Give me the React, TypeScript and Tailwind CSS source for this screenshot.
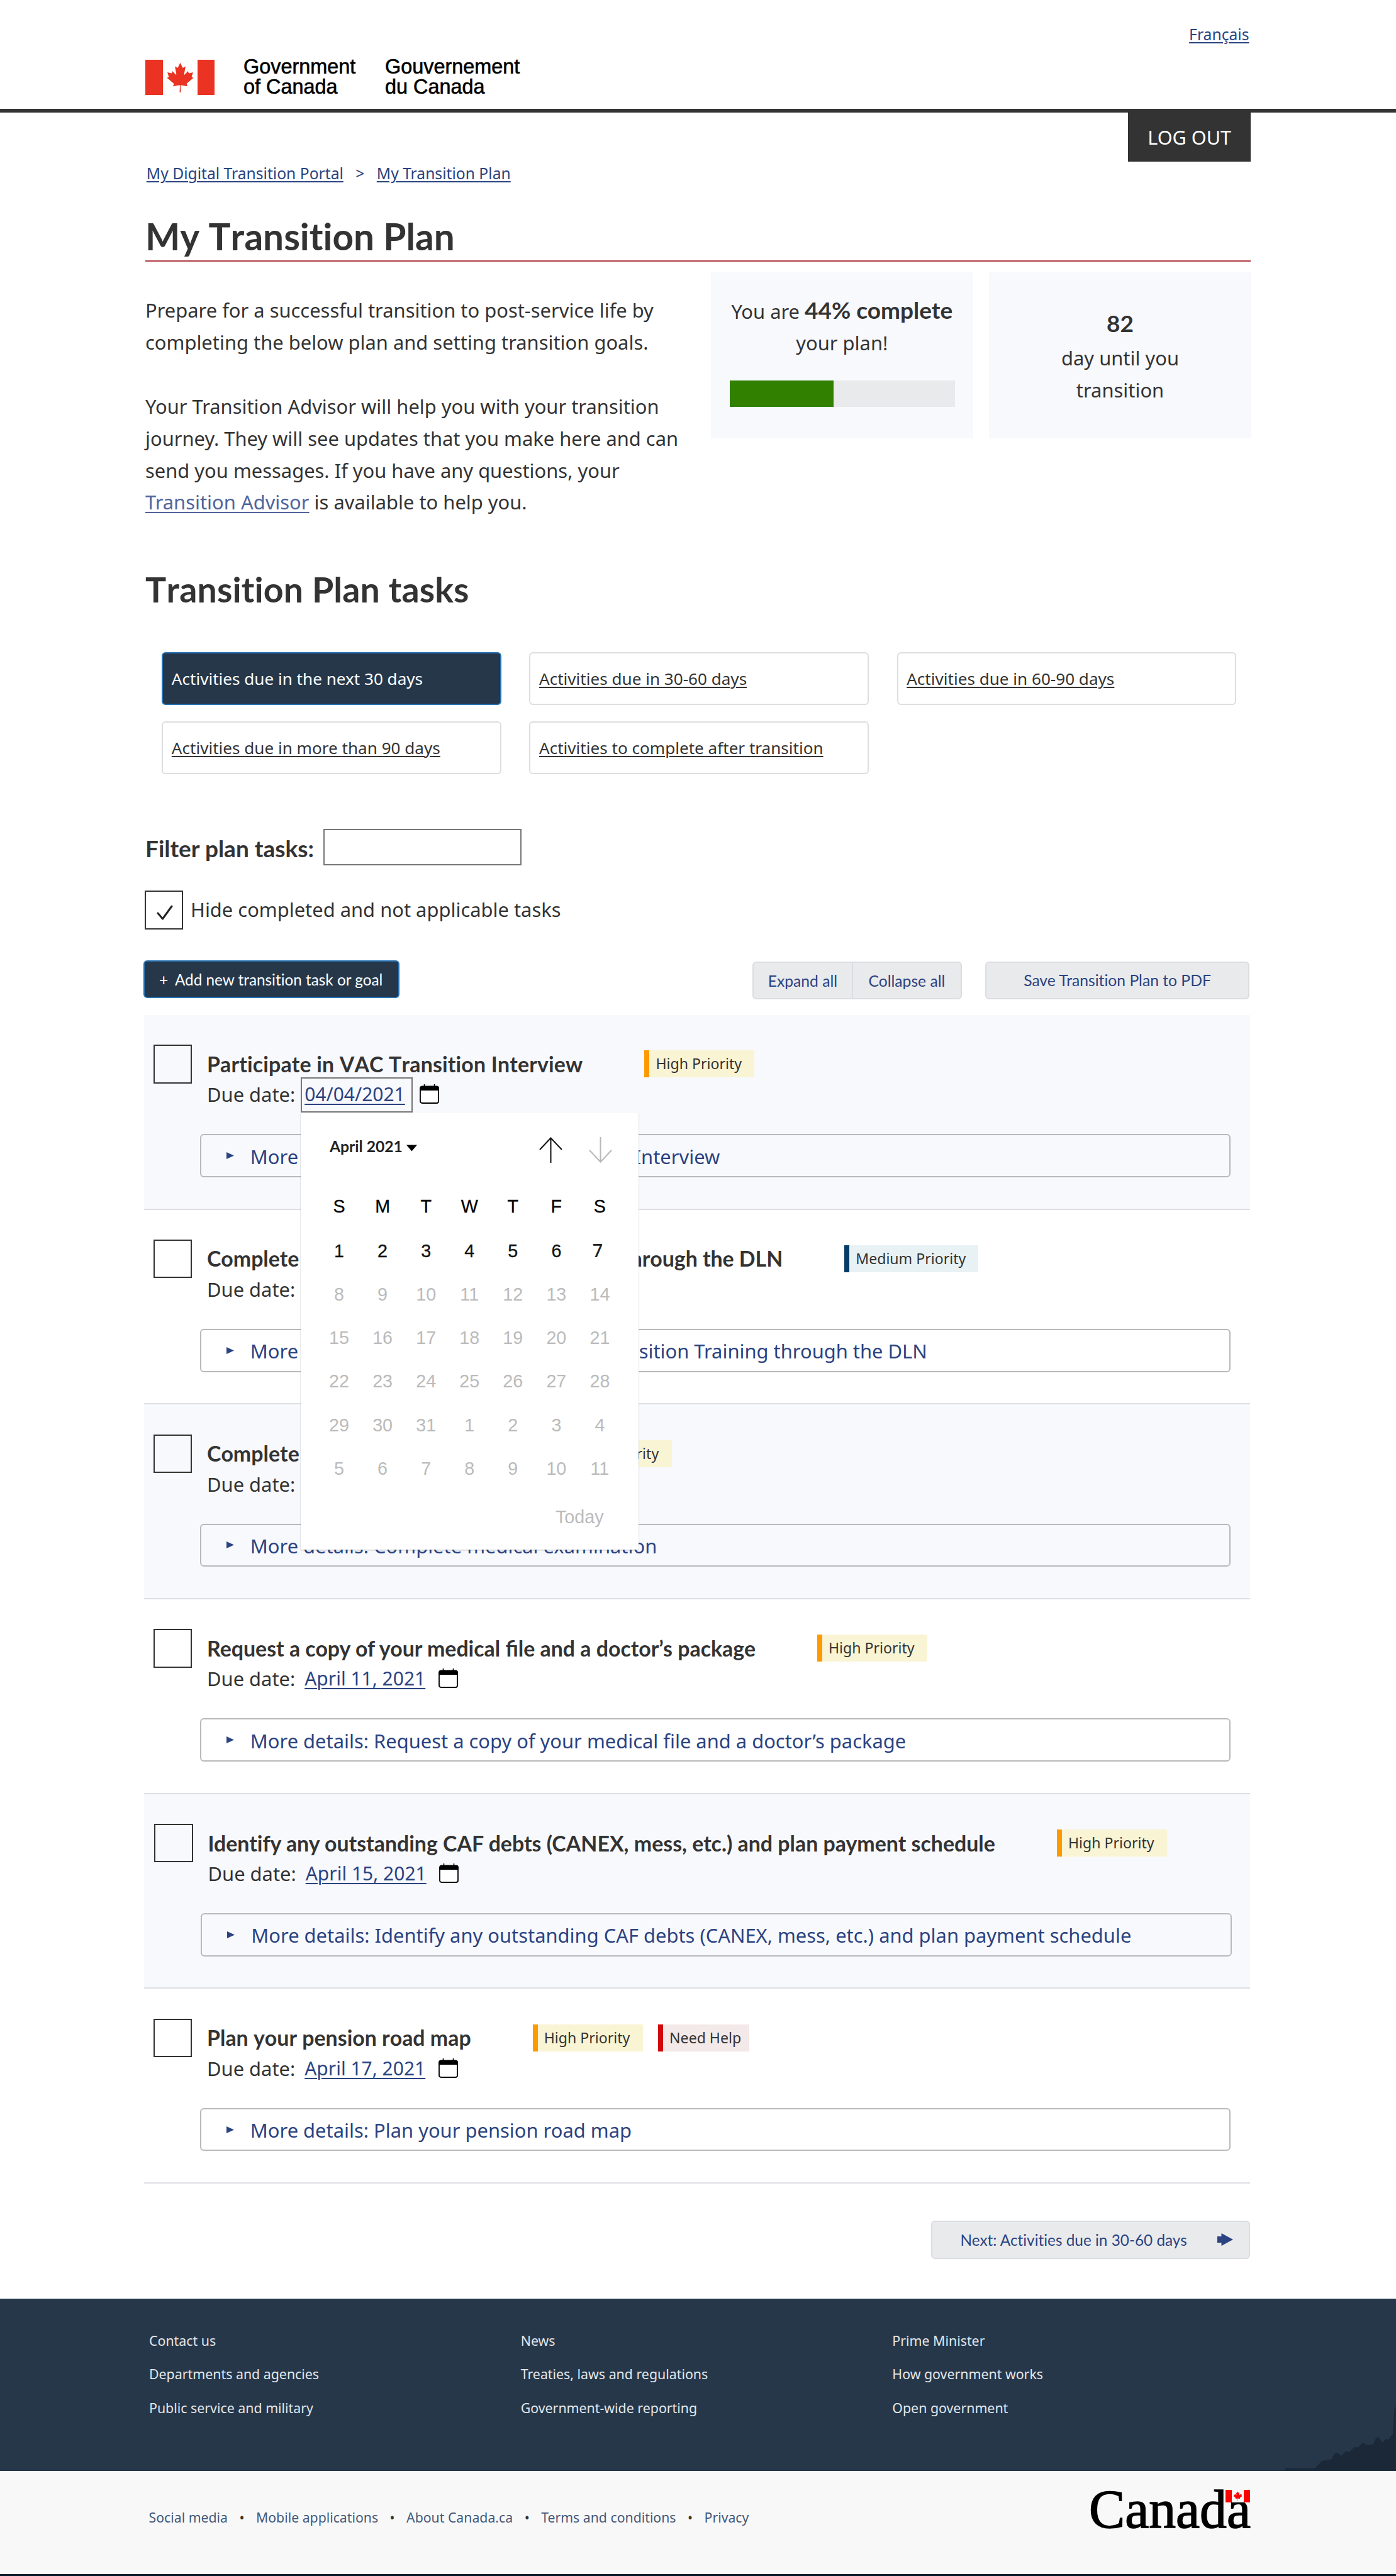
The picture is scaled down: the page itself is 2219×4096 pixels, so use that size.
import React from "react";

const LEAF =
  "M4890 4430l-45-863a95 95 0 0 1 111-98l859 151-116-320a65 65 0 0 1 20-73l941-762-212-99a65 65 0 0 1-34-79l186-572-542 115a65 65 0 0 1-73-38l-105-247-423 454a65 65 0 0 1-111-57l204-1052-327 189a65 65 0 0 1-91-27l-332-652-332 652a65 65 0 0 1-91 27l-327-189 204 1052a65 65 0 0 1-111 57l-423-454-105 247a65 65 0 0 1-73 38l-542-115 186 572a65 65 0 0 1-34 79l-212 99 941 762a65 65 0 0 1 20 73l-116 320 859-151a95 95 0 0 1 111 98l-45 863z";

const LATO = "font-['Lato',sans-serif]";

type Badge = "high" | "medium" | "help";

const BADGES: Record<Badge, { label: string; box: string }> = {
  high: { label: "High Priority", box: "w-[175px] bg-[#f9f4d4] border-[#ff9900]" },
  medium: { label: "Medium Priority", box: "w-[212.5px] bg-[#e8f1f4] border-[#083c68]" },
  help: { label: "Need Help", box: "w-[145px] bg-[#f3e9e8] border-[#d3080c]" },
};

interface Task {
  title: string;
  date: string;
  badges: Badge[];
  type: string;
  editing?: boolean;
  nudge?: boolean;
}

const TASKS: Task[] = [
  {
    title: "Participate in VAC Transition Interview",
    date: "04/04/2021",
    badges: ["high"],
    type: "[font-kerning:none] tracking-[0.16px]",
    editing: true,
  },
  {
    title: "Complete all mandatory Transition Training through the DLN",
    date: "April 6, 2021",
    badges: ["medium"],
    type: "[font-kerning:none] tracking-[-0.04px]",
  },
  { title: "Complete medical examination", date: "April 8, 2021", badges: ["high"], type: "[font-kerning:none]" },
  {
    title: "Request a copy of your medical file and a doctor’s package",
    date: "April 11, 2021",
    badges: ["high"],
    type: "[font-variant-ligatures:normal]",
  },
  {
    title: "Identify any outstanding CAF debts (CANEX, mess, etc.) and plan payment schedule",
    date: "April 15, 2021",
    badges: ["high"],
    type: "[font-kerning:normal]",
    nudge: true,
  },
  { title: "Plan your pension road map", date: "April 17, 2021", badges: ["high", "help"], type: "[font-kerning:none]" },
];

const WEEKS = [
  ["8", "9", "10", "11", "12", "13", "14"],
  ["15", "16", "17", "18", "19", "20", "21"],
  ["22", "23", "24", "25", "26", "27", "28"],
  ["29", "30", "31", "1", "2", "3", "4"],
  ["5", "6", "7", "8", "9", "10", "11"],
];

function CalendarIcon() {
  return (
    <svg className="mt-[11px] h-[31px] w-[31px] shrink-0" viewBox="0 0 31 31">
      <path d="M7.5 0v5M23.5 0v5" stroke="#000" strokeWidth="1.6" />
      <rect x="1" y="3.5" width="29" height="26.5" rx="3" fill="#fff" stroke="#000" strokeWidth="1.8" />
      <path d="M0.5 10V6a3 3 0 0 1 3-3h24a3 3 0 0 1 3 3v4z" fill="#000" />
    </svg>
  );
}

function DatePicker() {
  return (
    <div className="absolute -left-[2px] top-[53.4px] z-20 h-[695.3px] w-[537.5px] bg-white font-['Liberation_Sans',Arial,sans-serif] text-[28.7px] text-[#bbbbbb] shadow-[0_1px_2px_rgba(0,0,0,0.25)]">
      <div className="flex h-[119px] items-start pl-[46px]">
        <span className={`${LATO} mt-[39.4px] w-[116px] whitespace-nowrap text-[24.66px] leading-[30px] font-bold text-[#222]`}>
          April 2021
        </span>
        <svg className="mt-[51px] ml-[6.5px] h-[11px] w-[17px]" viewBox="0 0 17 11">
          <path d="M0 0.5h17L8.5 10.5z" fill="#000" />
        </svg>
        <svg className="mt-[39px] ml-[193.5px] h-[41px] w-[37px]" viewBox="0 0 37 41" fill="none" stroke="#111" strokeWidth="2">
          <path d="M18.5 41V1.5M1 20L18.5 1.5L36 20" />
        </svg>
        <svg className="mt-[39px] ml-[42.5px] h-[41px] w-[37px]" viewBox="0 0 37 41" fill="none" stroke="#b8b8b8" strokeWidth="2">
          <path d="M18.5 0V39.5M1 21L18.5 39.5L36 21" />
        </svg>
      </div>
      <div className="ml-[26.5px] grid w-[483.5px] grid-cols-7 text-center">
        {["S", "M", "T", "W", "T", "F", "S"].map((d, i) => (
          <span key={i} className="h-[70.8px] leading-[60px] text-black [-webkit-text-stroke:0.3px_black]">
            {d}
          </span>
        ))}
        {["1", "2", "3", "4", "5", "6"].map((d) => (
          <span key={d} className="h-[69.3px] leading-[60px] text-[#111] [-webkit-text-stroke:0.3px_#111]">
            {d}
          </span>
        ))}
        <span className="h-[69.3px] pr-[7px] font-['Noto_Sans',sans-serif] leading-[58px] font-medium text-[#222]">7</span>
        {WEEKS.map((w, r) =>
          w.map((d, i) => (
            <span key={`${r}-${i}`} className="h-[69.3px] leading-[60px]">
              {d}
            </span>
          ))
        )}
      </div>
      <div className="mt-[7.5px] pr-[56px] text-right leading-[60px]">Today</div>
    </div>
  );
}

function TaskRow({ task, shaded }: { task: Task; shaded: boolean }) {
  return (
    <div
      className={`flex h-[309.7px] items-start border-b-2 border-[#dedfe3] pt-[47.3px] ${
        shaded ? "bg-[#f8f9fd]" : "bg-white"
      } ${task.nudge ? "pl-[15.8px]" : "pl-[14.3px]"}`}
    >
      <div className="h-[61.4px] w-[61.6px] shrink-0 border-2 border-[#333]" />
      <div className="ml-[12.5px] w-[1638.7px] pt-[8.9px]">
        <div className="flex h-[43.2px] items-center pl-[11.2px]">
          <h3 className={`${LATO} mr-[98px] text-[33.9px] leading-[42px] font-bold whitespace-nowrap ${task.type}`}>
            {task.title}
          </h3>
          <div className="flex gap-[24.4px]">
            {task.badges.map((b) => (
              <span
                key={b}
                className={`${BADGES[b].box} h-[43.2px] border-l-8 pl-[10px] text-[23.1px] leading-[43.2px] whitespace-nowrap`}
              >
                {BADGES[b].label}
              </span>
            ))}
          </div>
        </div>
        <div className="flex h-[55.4px] items-start pl-[11.2px]">
          <span className="w-[149px] leading-[54px]">Due date:</span>
          {task.editing ? (
            <div className="relative mr-[10.8px] h-[55.4px] w-[178.4px] border-2 border-[#777] pl-[4.2px] text-[30px] leading-[50px]">
              <a className="text-[#2b4380] underline decoration-2 underline-offset-[4px]">{task.date}</a>
              <DatePicker />
            </div>
          ) : (
            <div className="w-[219px] pl-[6.2px] text-[30px] leading-[54px]">
              <a className="text-[#2b4380] underline decoration-2 underline-offset-[4px]">{task.date}</a>
            </div>
          )}
          <CalendarIcon />
        </div>
        <div className="mt-[34.6px] flex h-[68.5px] items-center rounded-[6px] border-2 border-[#b8b9bb] pl-[40px] text-[#2b4380]">
          <svg className="h-[11px] w-[12px]" viewBox="0 0 12 11">
            <path d="M0 0L12 5.5L0 11z" fill="#2b4380" />
          </svg>
          <span className="ml-[26px] pt-[2px] leading-[60px] whitespace-nowrap">More details: {task.title}</span>
        </div>
      </div>
    </div>
  );
}

const FOOTER = [
  ["Contact us", "Departments and agencies", "Public service and military"],
  ["News", "Treaties, laws and regulations", "Government-wide reporting"],
  ["Prime Minister", "How government works", "Open government"],
];

const LINKS = ["Social media", "Mobile applications", "About Canada.ca", "Terms and conditions", "Privacy"];

const FILTERS = [
  "Activities due in the next 30 days",
  "Activities due in 30-60 days",
  "Activities due in 60-90 days",
  "Activities due in more than 90 days",
  "Activities to complete after transition",
];

export default function App() {
  return (
    <div className="h-[4096px] w-[2219px] overflow-hidden bg-white font-['Noto_Sans',sans-serif] text-[30.9px] text-[#333] [font-variant-ligatures:none]">
      <header className="h-[179.4px] border-b-[6px] border-[#333] pt-[38.1px]">
        <div className="mx-auto w-[1757px]">
          <div className="pr-[2.5px] text-right text-[24.66px] leading-[34px]">
            <a className="text-[#2b4380] underline decoration-2 underline-offset-[3px]">Français</a>
          </div>
          <div className="mt-[17.5px] flex items-start font-['Liberation_Sans',Arial,sans-serif] text-[32.4px] leading-[32.8px] text-black [-webkit-text-stroke:0.6px_black]">
            <div className="mt-[5px] flex h-[56px] w-[110px] items-center justify-between">
              <div className="h-full w-[28px] bg-[#ea3323]" />
              <svg className="h-[48px] w-[43px]" viewBox="2900 330 3800 4130" preserveAspectRatio="none">
                <path d={LEAF} fill="#ea3323" stroke="none" />
              </svg>
              <div className="h-full w-[27px] bg-[#ea3323]" />
            </div>
            <div className="ml-[46px] w-[225px]">
              Government
              <br />
              of Canada
            </div>
            <div>
              Gouvernement
              <br />
              du Canada
            </div>
          </div>
        </div>
      </header>

      <main className="mx-auto w-[1757px]">
        <div className="flex justify-end">
          <button className="h-[78px] w-[194.6px] bg-[#333] text-center text-[30.6px] leading-[78px] text-white">LOG OUT</button>
        </div>
        <nav className="mt-[1.2px] flex pl-[1.8px] text-[24.66px] leading-[34px] text-[#2b4380]">
          <a className="underline decoration-2 underline-offset-[3px]">My Digital Transition Portal</a>
          <span className="w-[52.9px] text-center">&gt;</span>
          <a className="underline decoration-2 underline-offset-[3px]">My Transition Plan</a>
        </nav>
        <h1 className={`${LATO} mt-[47.4px] text-[58.56px] leading-[70px] font-bold [font-kerning:none]`}>My Transition Plan</h1>
        <div className="mt-[4.5px] h-[1.6px] bg-[#af3c43]" />

        <section className="flex items-start">
          <div className="w-[898.6px] pt-[52.4px] leading-[50.83px]">
            <p>
              Prepare for a successful transition to post-service life by
              <br />
              completing the below plan and setting transition goals.
            </p>
            <p className="mt-[50.83px]">
              Your Transition Advisor will help you with your transition
              <br />
              journey. They will see updates that you make here and can
              <br />
              send you messages. If you have any questions, your
              <br />
              <a className="text-[#4f659b] underline decoration-2 underline-offset-[4px]">Transition Advisor</a> is available to help you.
            </p>
          </div>
          <div className="mt-[16.8px] h-[263.7px] w-[417.4px] bg-[#f8f9fd] pt-[34.7px] text-center leading-[50.8px]">
            <p>
              You are <strong className={`${LATO} text-[37px] font-bold`}>44% complete</strong>
            </p>
            <p>your plan!</p>
            <div className="mt-[34.1px] ml-[30.6px] h-[41.6px] w-[357.9px] bg-[#e9eaeb]">
              <div className="h-full w-[46%] bg-[#318000]" />
            </div>
          </div>
          <div className="mt-[16.8px] -mr-[2px] ml-[24.8px] h-[263.7px] w-[417.5px] shrink-0 bg-[#f8f9fd] pt-[55.9px] text-center leading-[50.8px]">
            <strong className={`${LATO} block text-[37px] font-bold`}>82</strong>
            <p className="mt-[4.2px]">
              day until you
              <br />
              transition
            </p>
          </div>
        </section>

        <h2 className={`${LATO} mt-[79.3px] text-[55.47px] leading-[66px] font-bold tracking-[0.15px] [font-kerning:none]`}>
          Transition Plan tasks
        </h2>

        <div className="mt-[67.5px] ml-[26.3px] grid w-[1707.7px] grid-cols-3 gap-x-[44.9px] gap-y-[25.3px] text-[26.1px]">
          {FILTERS.map((f, i) => (
            <a
              key={f}
              className={`h-[84.3px] rounded-[6px] border-2 pl-[13.5px] leading-[81.5px] ${
                i === 0
                  ? "border-[#2572b4] bg-[#26374a] text-white"
                  : "border-[#dddee0] underline decoration-2 underline-offset-[3px]"
              }`}
            >
              {f}
            </a>
          ))}
        </div>

        <div className="mt-[86.6px] flex h-[58.7px] items-start">
          <label className={`${LATO} w-[283px] text-[37px] leading-[61px] font-bold`}>Filter plan tasks:</label>
          <div className="h-[58.7px] w-[315px] border-2 border-[#777]" />
        </div>

        <div className="mt-[39.8px] flex h-[61.8px] items-start">
          <div className="-ml-[1.2px] h-[61.8px] w-[61.4px] border-2 border-[#333]">
            <svg className="mt-[21px] ml-[17px] h-[24px] w-[26px]" viewBox="0 0 26 24" fill="none">
              <path d="M2 13L9.5 22L24 2" stroke="#222" strokeWidth="3" strokeLinecap="round" strokeLinejoin="round" />
            </svg>
          </div>
          <span className="ml-[11.8px] leading-[60px]">Hide completed and not applicable tasks</span>
        </div>

        <div className={`${LATO} mt-[49.4px] flex h-[61.7px] items-start text-[24.66px] text-[#2b4380]`}>
          <button className="-ml-[3.1px] flex h-[60.2px] w-[407px] items-center rounded-[6px] border-2 border-[#2572b4] bg-[#26374a] pl-[23px] leading-[59px] text-white">
            <span className="w-[25px] text-left">+</span>
            <span className="text-[24.3px]">Add new transition task or goal</span>
          </button>
          <div className="mt-[1.6px] ml-[561px] flex h-[60.2px] w-[333px] rounded-[6px] border-2 border-[#dcdde1] bg-[#e9eaec] text-center leading-[58px]">
            <button className="w-[158px] border-r-2 border-[#dcdde1]">Expand all</button>
            <button className="flex-1">Collapse all</button>
          </div>
          <button className="mt-[1.6px] ml-[36.8px] h-[60.2px] w-[420.6px] rounded-[6px] border-2 border-[#dcdde1] bg-[#e9eaec] leading-[56px]">
            Save Transition Plan to PDF
          </button>
        </div>

        <section className="mt-[25.1px] -ml-[1.6px] w-[1757.4px]">
          {TASKS.map((t, i) => (
            <TaskRow key={t.title} task={t} shaded={i % 2 === 0} />
          ))}
        </section>

        <div className="mt-[59.3px] flex justify-end pr-[1.5px]">
          <button
            className={`${LATO} flex h-[60.2px] w-[507px] items-center rounded-[6px] border-2 border-[#dcdde1] bg-[#e9eaec] pl-[45px] text-[24.35px] leading-[56px] text-[#2b4380]`}
          >
            <span className="w-[408px] text-left">Next: Activities due in 30-60 days</span>
            <svg className="-mt-[2px] h-[20px] w-[25px]" viewBox="0 0 25 20">
              <path d="M0 5H6.5V0L25 10L6.5 20V15H0z" fill="#2b4380" />
            </svg>
          </button>
        </div>
      </main>

      <footer className="mt-[63.2px] text-[21.35px]">
        <div className="relative h-[274px] bg-[#26374a] pt-[39.9px] text-[#e3e6e9]">
          <div className="ml-[237px] grid w-[1772px] grid-cols-3">
            {FOOTER.map((col, i) => (
              <ul key={i}>
                {col.map((l) => (
                  <li key={l} className="leading-[53.6px]">
                    {l}
                  </li>
                ))}
              </ul>
            ))}
          </div>
          <svg className="absolute right-0 bottom-0 h-[102.3px] w-[175.7px]" viewBox="1270 680 298 338" preserveAspectRatio="none">
            <path
              d="M1270 1018V1006H1350L1368 968L1395 958L1402 930L1410 925L1421 942L1434 915L1441 922L1458 893L1466 897L1478 874L1495 885L1508 880L1512 855L1520 840L1532 872L1541 852L1548 857L1560 825L1564 700L1568 680V1018z"
              fill="#1a2838"
            />
          </svg>
        </div>
        <div className="flex h-[164.4px] items-start bg-[#f8f8f8] pl-[236.5px]">
          <div className="flex flex-1 pt-[49px] text-[21.25px] leading-[50px] text-[#44597a]">
            {LINKS.map((l, i) => (
              <React.Fragment key={l}>
                {i > 0 && <span className="w-[45px] text-center text-[#333]">•</span>}
                <a className="whitespace-nowrap">{l}</a>
              </React.Fragment>
            ))}
          </div>
          <svg className="mt-[8.5px] mr-[218px] h-[120px] w-[270px]" viewBox="0 -20 270 120">
            <text
              x="0"
              y="62"
              fontFamily="Liberation Serif, Times New Roman, serif"
              fontSize="87"
              textLength="257"
              lengthAdjust="spacingAndGlyphs"
              fill="#000"
              stroke="#000"
              strokeWidth="1.5"
            >
              Canada
            </text>
            <rect x="217" y="1.5" width="39.5" height="20.5" fill="#f8f8f8" />
            <rect x="217" y="2" width="10" height="20" fill="#f00" />
            <rect x="246" y="2" width="10" height="20" fill="#f00" />
            <svg x="229.5" y="4" width="14" height="15.5" viewBox="2900 330 3800 4130">
              <path d={LEAF} fill="#f00" />
            </svg>
          </svg>
        </div>
        <div className="h-[3px] bg-[#08182b]" />
      </footer>
    </div>
  );
}
